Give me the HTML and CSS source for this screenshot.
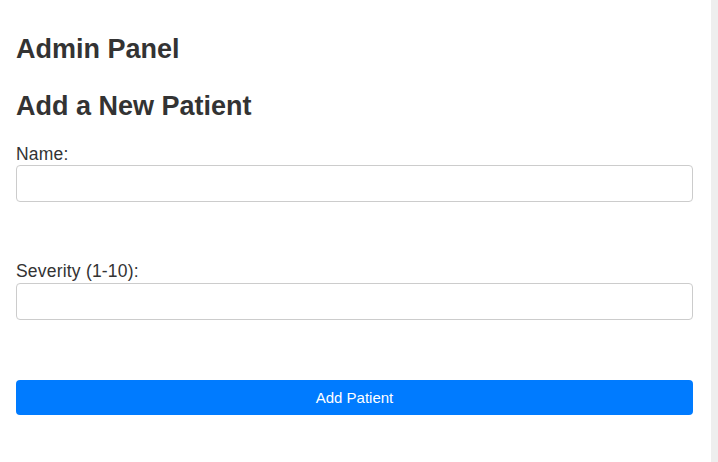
FILE: index.html
```html
<!DOCTYPE html>
<html lang="en">
<head>
<meta charset="utf-8">
<title>Admin Panel</title>
<link rel="stylesheet" href="styles.css">
</head>
<body>
<div class="panel">
  <h2 class="title">Admin Panel</h2>
  <h2 class="subtitle">Add a New Patient</h2>
  <form class="form">
    <div class="group">
      <label class="label" for="name">Name:</label>
      <input class="field" id="name" type="text">
    </div>
    <div class="group">
      <label class="label" for="severity">Severity (1-10):</label>
      <input class="field" id="severity" type="number">
    </div>
    <button class="btn" type="button">Add Patient</button>
  </form>
</div>
</body>
</html>
```
FILE: styles.css
```css
html, body {
  margin: 0;
  padding: 0;
}
body {
  background: #eeeeee;
  font-family: "Liberation Sans", Arial, sans-serif;
  color: #333333;
  height: 462px;
  overflow: hidden;
}
.panel {
  box-sizing: border-box;
  width: 711px;
  height: 462px;
  background: #ffffff;
  padding: 33.5px 18px 0 16px;
}
.title {
  font-size: 27px;
  font-weight: bold;
  margin: 0 0 27px;
  line-height: 30px;
}
.subtitle {
  font-size: 27px;
  font-weight: bold;
  margin: 0 0 23px;
  line-height: 30px;
}
.form {
  display: flex;
  flex-direction: column;
  gap: 59px;
}
.group {
  display: flex;
  flex-direction: column;
}
.label {
  font-size: 17.5px;
  line-height: 20px;
  letter-spacing: 0.2px;
  margin-bottom: 1.5px;
}
.field {
  box-sizing: border-box;
  height: 37px;
  width: 100%;
  border: 1px solid #cccccc;
  border-radius: 4px;
  padding: 8px;
  font-size: 16px;
  font-family: inherit;
  background: #ffffff;
  margin: 0;
}
.btn {
  box-sizing: border-box;
  height: 35px;
  width: 100%;
  border: none;
  border-radius: 4px;
  background: #007bff;
  color: #ffffff;
  font-family: inherit;
  font-size: 15px;
  margin: 1px 0 0;
  padding: 0;
}
```
